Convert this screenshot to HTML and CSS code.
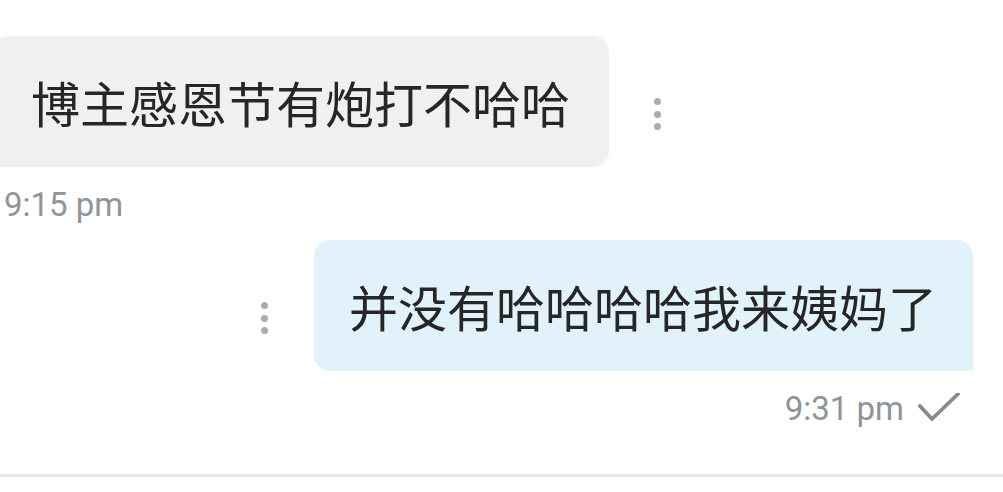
FILE: index.html
```html
<!DOCTYPE html>
<html lang="zh">
<head>
<meta charset="UTF-8">
<meta name="viewport" content="width=device-width, initial-scale=1.0">
<title>Chat</title>
<link rel="stylesheet" href="styles.css">
</head>
<body>

<div class="chat">
    <div class="row row-in">
        <div class="bubble bubble-in">博主感恩节有炮打不哈哈</div>
        <div class="dots"><span></span><span></span><span></span></div>
    </div>
    <div class="meta meta-in">9:15 pm</div>

    <div class="row row-out">
        <div class="dots"><span></span><span></span><span></span></div>
        <div class="bubble bubble-out">并没有哈哈哈哈我来姨妈了</div>
    </div>
    <div class="meta meta-out">
        <span>9:31 pm</span>
        <svg class="tick" width="42" height="30" viewBox="0 0 42 30">
            <polyline points="2,13 14,26 40,1" fill="none" stroke="#868b93" stroke-width="3.8" stroke-linecap="round" stroke-linejoin="round"/>
        </svg>
    </div>
</div>

<div class="composer-line"></div>

</body>
</html>
```

FILE: styles.css
```css
body {
    margin: 0;
    padding: 0;
    background-color: #fff;
    font-family: "Noto Sans CJK SC", "Noto Sans", sans-serif;
    overflow: hidden;
}

.chat {
    padding-top: 36px;
}

.row {
    display: flex;
    align-items: flex-start;
}

.row-out {
    justify-content: flex-end;
    padding-right: 30px;
    margin-top: 16px;
}

.bubble {
    font-size: 49px;
    line-height: 67px;
    padding: 32px 36px;
    color: #262626;
    white-space: nowrap;
}

.bubble-in {
    background-color: #eff0f2;
    border-radius: 16px 16px 16px 0;
    margin-left: -8px;
    padding-left: 39px;
    padding-right: 39px;
}

.bubble-out {
    background-color: #e1f2fa;
    border-radius: 16px 16px 0 16px;
    padding-left: 35px;
}

.dots {
    display: flex;
    flex-direction: column;
    gap: 5.5px;
    margin-top: 62px;
}

.row-in .dots {
    margin-left: 45px;
}

.row-out .dots {
    margin-right: 46px;
}

.dots span {
    width: 7px;
    height: 7px;
    border-radius: 50%;
    background-color: #a9acb3;
}

.meta {
    font-family: Roboto, "Liberation Sans", sans-serif;
    font-size: 33px;
    line-height: 38px;
    color: #8f949c;
    margin-top: 19px;
}

.meta-in {
    padding-left: 4px;
}

.meta-out {
    display: flex;
    justify-content: flex-end;
    align-items: center;
    gap: 14px;
    padding-right: 43px;
}

.tick {
    display: block;
    margin-top: -2px;
}

.composer-line {
    height: 3px;
    background-color: #e6e6e6;
    margin-top: 46px;
}
```
